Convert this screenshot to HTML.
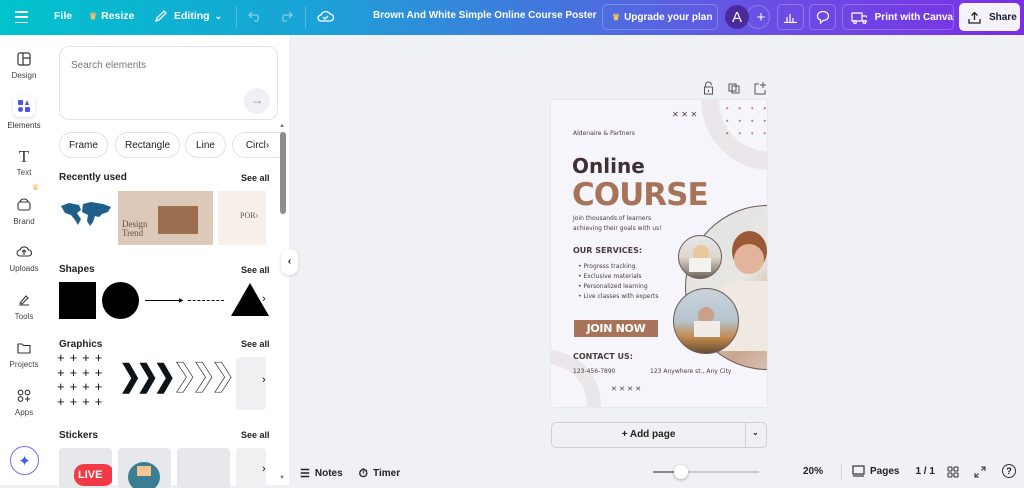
<!DOCTYPE html>
<html><head><meta charset="utf-8"><style>
*{box-sizing:border-box;margin:0;padding:0}
body{width:1024px;height:485px;overflow:hidden;font-family:"Liberation Sans",sans-serif;background:#f0f1f5;position:relative;color:#0d1216}
.a{position:absolute}
.hdr{left:0;top:0;width:1024px;height:35px;background:linear-gradient(90deg,#00c3cc 0%,#1aa3d6 30%,#3d7ddc 50%,#6a4fe4 75%,#7b2ee6 100%);color:#fff;font-size:10.5px;font-weight:bold;white-space:nowrap}
.hdr .a{display:flex;align-items:center}
.hb{border:1px solid rgba(255,255,255,.25);border-radius:5px;height:26px;top:4px}
.rail{left:0;top:35px;width:48px;height:450px;background:#fff}
.ri{width:48px;text-align:center;font-size:8px;color:#444}
.panel{left:48px;top:35px;width:241px;height:450px;background:#fff}
.ttl{font-size:10px;font-weight:bold;color:#222}
.see{font-size:9px;font-weight:bold;color:#222}
.chip{top:132px;height:26px;border:1px solid #e2e0f0;border-radius:13px;font-size:10px;display:flex;align-items:center;justify-content:center;color:#222}
.th{border-radius:4px;background:#e7e8ec}
.poster{left:551px;top:100px;width:216px;height:307px;background:#f6f5fb;overflow:hidden;box-shadow:0 0 2px rgba(0,0,0,.1)}
.pt{font-family:"DejaVu Sans",sans-serif;color:#4a3c3c;white-space:nowrap}
.circ{border-radius:50%;border:1.5px solid #6d5a55;overflow:hidden}
</style></head><body>
<div class="a hdr">
 <div class="a" style="left:14px;top:9px;width:14px;height:16px;flex-direction:column;justify-content:space-between;padding:2px 0"><i style="display:block;width:13px;height:1.5px;background:#fff"></i><i style="display:block;width:13px;height:1.5px;background:#fff"></i><i style="display:block;width:13px;height:1.5px;background:#fff"></i></div>
 <div class="a" style="left:54px;top:10px">File</div>
 <div class="a" style="left:89px;top:10px"><span style="color:#f7c15a;font-size:9px;margin-right:4px">♛</span>Resize</div>
 <div class="a" style="left:154px;top:9px"><svg width="14" height="14" viewBox="0 0 14 14" fill="none" stroke="#fff" stroke-width="1.3"><path d="M2 12l1-3 7-7 2 2-7 7z"/></svg><span style="margin-left:6px">Editing</span><span style="margin-left:5px;font-size:9px">⌄</span></div>
 <div class="a" style="left:236px;top:6px;width:1px;height:22px;background:rgba(255,255,255,.25)"></div>
 <div class="a" style="left:248px;top:10px;opacity:.45"><svg width="14" height="12" fill="none" stroke="#fff" stroke-width="1.3"><path d="M4 2L1 5l3 3M1 5h8a4 4 0 010 6H6"/></svg></div>
 <div class="a" style="left:279px;top:10px;opacity:.45"><svg width="14" height="12" fill="none" stroke="#fff" stroke-width="1.3"><path d="M10 2l3 3-3 3M13 5H5a4 4 0 000 6h3"/></svg></div>
 <div class="a" style="left:305px;top:6px;width:1px;height:22px;background:rgba(255,255,255,.25)"></div>
 <div class="a" style="left:317px;top:9px"><svg width="17" height="14" fill="none" stroke="#fff" stroke-width="1.3"><path d="M4 12a3 3 0 010-6 5 5 0 019-1 3.5 3.5 0 010 7z M6 8l2 2 3-3"/></svg></div>
 <div class="a" style="left:373px;top:10px;font-size:10px">Brown And White Simple Online Course Poster</div>
 <div class="a hb" style="left:602px;width:116px;padding-left:9px;font-size:10px"><span style="color:#f7c15a;font-size:9px;margin-right:4px">♛</span>Upgrade your plan</div>
 <div class="a" style="left:746px;top:5px;width:24px;height:24px;border-radius:50%;border:1px solid rgba(255,255,255,.25);justify-content:center;font-size:15px;font-weight:normal;padding-left:6px">+</div>
 <div class="a" style="left:725px;top:5px;width:24px;height:24px;border-radius:50%;background:#4b2a9e;justify-content:center;font-size:15px;font-weight:normal">A</div>
 <div class="a hb" style="left:777px;width:27px;justify-content:center"><svg width="13" height="11" fill="none" stroke="#fff" stroke-width="1.2"><path d="M0 10.5h13M3 10V5M6 10V2M9 10V6"/></svg></div>
 <div class="a hb" style="left:809px;width:27px;justify-content:center"><svg width="14" height="14" fill="none" stroke="#fff" stroke-width="1.2"><path d="M7 1.5c3.3 0 5.5 2 5.5 4.5S10.3 10.5 7 10.5L4.5 13v-3C2.5 9.3 1.5 7.8 1.5 6 1.5 3.5 3.7 1.5 7 1.5z"/></svg></div>
 <div class="a hb" style="left:842px;width:112px;padding-left:8px;font-size:10px"><svg width="18" height="13" fill="none" stroke="#fff" stroke-width="1.2"><path d="M1 2h10v8H1zM11 5h4l2 2v3h-6"/><circle cx="4" cy="11" r="1.4"/><circle cx="13.5" cy="11" r="1.4"/></svg><span style="margin-left:8px">Print with Canva</span></div>
 <div class="a" style="left:959px;top:3px;width:61px;height:28px;background:#f4f2fa;border-radius:5px;color:#1a1a2a;padding-left:9px;font-size:10px"><svg width="13" height="13" fill="none" stroke="#222" stroke-width="1.3"><path d="M6.5 9V1.5M3.5 4.5l3-3 3 3M1 8v4h11V8"/></svg><span style="margin-left:8px">Share</span></div>
</div>

<div class="a rail">
 <div class="a ri" style="top:17px"><svg width="14" height="14" fill="none" stroke="#333" stroke-width="1.2"><rect x="1" y="1" width="12" height="12" rx="2"/><path d="M6 1v12M6 6h7"/></svg><div style="margin-top:3px">Design</div></div>
 <div class="a" style="left:13px;top:60px;width:22px;height:22px;border-radius:5px;background:#fff;box-shadow:0 1px 3px rgba(0,0,0,.15)"></div>
 <div class="a" style="left:18px;top:65px;width:12px;height:12px"><i class="a" style="left:0;top:0;width:5px;height:5px;background:#4a55e8;border-radius:1px"></i><i class="a" style="left:7px;top:0;width:0;height:0;border-left:2.5px solid transparent;border-right:2.5px solid transparent;border-bottom:5px solid #4a55e8"></i><i class="a" style="left:0;top:7px;width:5px;height:5px;background:#4a55e8;border-radius:50%"></i><i class="a" style="left:7px;top:7px;width:5px;height:5px;background:#4a55e8;border-radius:1px"></i></div>
 <div class="a ri" style="top:86px;color:#333">Elements</div>
 <div class="a ri" style="top:113px"><div style="font-family:'Liberation Serif',serif;font-size:17px;color:#333;line-height:17px">T</div><div style="margin-top:3px">Text</div></div>
 <div class="a" style="left:32px;top:148px;color:#f7b640;font-size:8px">♛</div>
 <div class="a ri" style="top:163px"><svg width="14" height="13" fill="none" stroke="#333" stroke-width="1.1"><rect x="1" y="4" width="12" height="8" rx="2"/><path d="M3 4a4 3 0 018 0"/></svg><div style="margin-top:4px">Brand</div></div>
 <div class="a ri" style="top:210px"><svg width="16" height="13" fill="none" stroke="#333" stroke-width="1.1"><path d="M4 11a3 3 0 010-6 4.5 4.5 0 018.5 0 3 3 0 010 6H4zM8 10V5M6 7l2-2 2 2"/></svg><div style="margin-top:4px">Uploads</div></div>
 <div class="a ri" style="top:258px"><svg width="14" height="13" fill="none" stroke="#333" stroke-width="1.1"><path d="M3 10l6-7 2 2-6 6zM2 12h10"/></svg><div style="margin-top:4px">Tools</div></div>
 <div class="a ri" style="top:306px"><svg width="14" height="13" fill="none" stroke="#333" stroke-width="1.1"><path d="M1 3h4l1.5 1.5H13V12H1z"/></svg><div style="margin-top:4px">Projects</div></div>
 <div class="a ri" style="top:354px"><svg width="14" height="13" fill="none" stroke="#333" stroke-width="1.1"><circle cx="3.5" cy="3.5" r="2.3"/><circle cx="10.5" cy="3.5" r="2.3"/><circle cx="3.5" cy="10" r="2.3"/><path d="M10.5 7.5v5M8 10h5"/></svg><div style="margin-top:4px">Apps</div></div>
 <div class="a" style="left:10px;top:411px;width:29px;height:29px;border-radius:50%;border:1.5px solid #7a6df0;background:#fff;display:flex;align-items:center;justify-content:center;color:#3e5ff0;font-size:15px">✦</div>
</div>

<div class="a panel">
 <div class="a" style="left:11px;top:11px;width:219px;height:74px;border:1px solid #e3e0f5;border-radius:10px"><div class="a" style="left:11px;top:13px;font-size:10px;color:#777">Search elements</div><div class="a" style="left:184px;top:41px;width:26px;height:26px;border-radius:50%;background:#eef0f3;color:#888;text-align:center;line-height:25px;font-size:12px">→</div></div>
 <div class="a chip" style="left:11px;top:97px;width:49px">Frame</div>
 <div class="a chip" style="left:67px;top:97px;width:65px">Rectangle</div>
 <div class="a chip" style="left:137px;top:97px;width:41px">Line</div>
 <div class="a chip" style="left:184px;top:97px;width:50px;border-right:none;border-radius:13px 0 0 13px">Circl›</div>
 <div class="a ttl" style="left:11px;top:137px">Recently used</div><div class="a see" style="left:193px;top:138px">See all</div>
 <svg class="a" style="left:11px;top:165px" width="54" height="30" fill="#1e5f8c"><path d="M2 6l8-3 10 2 2 5-4 3 4 6-3 6-3-5-4-5-6-2zM24 4l8-2 12 2 8 3-3 5-6 2-3 3-4-1-2 6-3 4-3-5 1-6-6-3z"/></svg>
 <div class="a" style="left:70px;top:156px;width:95px;height:54px;background:#dcc9b7"><div class="a" style="left:40px;top:15px;width:40px;height:28px;background:#9a6e4f"></div><div class="a" style="left:4px;top:29px;font-family:'Liberation Serif',serif;font-size:9px;color:#6b5040;line-height:9px">Design<br>Trend</div></div>
 <div class="a" style="left:170px;top:156px;width:48px;height:54px;background:#f7efea"><div class="a" style="left:22px;top:20px;font-family:'Liberation Serif',serif;font-size:8px;color:#555">POR›</div></div>
 <div class="a ttl" style="left:11px;top:229px">Shapes</div><div class="a see" style="left:193px;top:230px">See all</div>
 <div class="a" style="left:11px;top:247px;width:37px;height:37px;background:#000"></div>
 <div class="a" style="left:54px;top:247px;width:37px;height:37px;background:#000;border-radius:50%"></div>
 <div class="a" style="left:97px;top:265px;width:37px;height:1px;background:#000"></div><div class="a" style="left:131px;top:262px;font-size:6px">▶</div>
 <div class="a" style="left:140px;top:265px;width:36px;border-top:1px dashed #000"></div>
 <div class="a" style="left:183px;top:248px;width:0;height:0;border-left:19px solid transparent;border-right:19px solid transparent;border-bottom:33px solid #000"></div>
 <div class="a" style="left:214px;top:258px;font-size:11px">›</div>
 <div class="a ttl" style="left:11px;top:304px">Graphics</div><div class="a see" style="left:193px;top:304px">See all</div>
 <div class="a" style="left:9px;top:316px;font-size:13px;line-height:14.5px;letter-spacing:5px">++++<br>++++<br>++++<br>++++</div>
 <div class="a" style="left:68px;top:327px;font-size:30px;font-weight:bold;letter-spacing:-6px;line-height:30px;transform:scaleX(.9)">❯❯❯</div>
 <div class="a" style="left:124px;top:326px;font-size:30px;line-height:30px;letter-spacing:-6px;color:#fff;-webkit-text-stroke:.7px #333">❯❯❯</div>
 <div class="a th" style="left:188px;top:322px;width:30px;height:53px;background:#f0f0f2"></div><div class="a" style="left:214px;top:339px;font-size:11px">›</div>
 <div class="a ttl" style="left:11px;top:395px">Stickers</div><div class="a see" style="left:193px;top:395px">See all</div>
 <div class="a th" style="left:11px;top:413px;width:53px;height:40px;overflow:hidden"><div class="a" style="left:15px;top:16px;width:40px;height:22px;background:#f23a46;border-radius:10px;color:#fff;font-weight:bold;font-size:11px;line-height:22px;padding-left:4px">LIVE</div></div>
 <div class="a th" style="left:70px;top:413px;width:53px;height:40px;overflow:hidden"><div class="a" style="left:10px;top:14px;width:32px;height:30px;border-radius:50%;background:#3c7d94"></div><div class="a" style="left:19px;top:18px;width:14px;height:10px;background:#f2c592"></div></div>
 <div class="a th" style="left:129px;top:413px;width:53px;height:40px"></div>
 <div class="a th" style="left:188px;top:413px;width:30px;height:40px;background:#f0f0f2"></div><div class="a" style="left:214px;top:428px;font-size:11px">›</div>
 <div class="a" style="left:232px;top:97px;width:6px;height:82px;background:#8d8d8d;border-radius:3px"></div>
 <div class="a" style="left:231px;top:88px;font-size:6px;color:#777">▲</div><div class="a" style="left:231px;top:440px;font-size:6px;color:#777">▼</div>
</div>
<div class="a" style="left:281px;top:249px;width:17px;height:26px;background:#fff;border-radius:8px;box-shadow:0 1px 3px rgba(0,0,0,.15);text-align:center;line-height:26px;font-size:10px;font-weight:bold">‹</div>

<svg class="a" style="left:703px;top:81px" width="66" height="14" fill="none" stroke="#555" stroke-width="1"><path d="M2.5 6V4a3 3 0 016 0M1.5 6h8v7h-8zM5.5 9v2"/><rect x="26" y="3" width="7" height="7"/><rect x="29" y="5" width="7" height="7"/><path d="M56 3H52v10h10V9M60 1v6M57 4h6"/></svg>

<div class="a poster">
 <div class="a" style="left:150px;top:-70px;width:140px;height:140px;border-radius:50%;border:18px solid #ebe6ea"></div>
 <div class="a" style="left:-60px;top:250px;width:110px;height:110px;border-radius:50%;border:14px solid #ebe6ea"></div>
 <div class="a" style="left:170px;top:2px;width:46px;height:40px;background-image:radial-gradient(circle,#c07a58 0.9px,transparent 1.2px);background-size:12.5px 12.5px"></div>
 <div class="a pt" style="left:121px;top:10px;font-size:8px">✕ ✕ ✕</div>
 <div class="a pt" style="left:22px;top:30px;font-size:6px">Aldenaire &amp; Partners</div>
 <div class="a pt" style="left:21px;top:54px;font-size:20px;font-weight:bold;color:#3e3033">Online</div>
 <div class="a pt" style="left:21px;top:77px;font-size:31px;font-weight:bold;color:#a7745a;letter-spacing:-1px;line-height:36px">COURSE</div>
 <div class="a pt" style="left:22px;top:114px;font-size:6px;line-height:9.5px">Join thousands of learners<br>achieving their goals with us!</div>
 <div class="a pt" style="left:22px;top:146px;font-size:8px;font-weight:bold">OUR SERVICES:</div>
 <div class="a pt" style="left:27px;top:162px;font-size:6px;line-height:10px">• Progress tracking<br>• Exclusive materials<br>• Personalized learning<br>• Live classes with experts</div>
 <div class="a" style="left:23px;top:220px;width:84px;height:17px;background:#a7745a;color:#fff;font-family:'DejaVu Sans',sans-serif;font-weight:bold;font-size:11px;text-align:center;line-height:17px;letter-spacing:-.3px">JOIN NOW</div>
 <div class="a pt" style="left:22px;top:252px;font-size:8px;font-weight:bold">CONTACT US:</div>
 <div class="a pt" style="left:22px;top:268px;font-size:6px">123-456-7890</div>
 <div class="a pt" style="left:99px;top:268px;font-size:6px">123 Anywhere st., Any City</div>
 <div class="a pt" style="left:60px;top:285px;font-size:7px">✕ ✕ ✕ ✕</div>
 <div class="a circ" style="left:134px;top:105px;width:165px;height:165px;background:linear-gradient(135deg,#dfe2e4 0%,#e8e6e2 40%,#c8a58e 60%,#f0ece6 100%)"><div class="a" style="left:46px;top:25px;width:35px;height:40px;border-radius:50%;background:#9b5a35"></div><div class="a" style="left:48px;top:38px;width:30px;height:30px;border-radius:50%;background:#e2b49c"></div><div class="a" style="left:30px;top:75px;width:70px;height:70px;background:#efe9e2;border-radius:30% 30% 0 0"></div></div>
 <div class="a circ" style="left:127px;top:135px;width:44px;height:44px;background:linear-gradient(180deg,#e5e7ea 0%,#dfd7cc 50%,#6d665f 100%)"><div class="a" style="left:14px;top:9px;width:16px;height:16px;border-radius:50%;background:#e8c79b"></div><div class="a" style="left:10px;top:22px;width:22px;height:14px;background:#f4f2ef"></div></div>
 <div class="a circ" style="left:122px;top:188px;width:66px;height:66px;background:linear-gradient(180deg,#cad3db 0%,#b6c4ce 50%,#c28a4e 75%,#6a4e34 100%)"><div class="a" style="left:24px;top:18px;width:16px;height:17px;border-radius:50%;background:#caa089"></div><div class="a" style="left:20px;top:32px;width:26px;height:16px;background:#f0ece8"></div></div>
</div>

<div class="a" style="left:551px;top:422px;width:216px;height:26px;border:1px solid #cfcfd6;border-radius:5px;background:#f0f1f5;font-size:10px;font-weight:bold;color:#222"><div class="a" style="left:0;top:0;width:193px;height:24px;text-align:center;line-height:24px">+ Add page</div><div class="a" style="left:193px;top:0;width:1px;height:24px;background:#cfcfd6"></div><div class="a" style="left:200px;top:5px;font-size:8px">⌄</div></div>

<div class="a" style="left:300px;top:466px;font-size:10px;font-weight:bold;color:#222;display:flex;align-items:center"><span style="font-size:11px;margin-right:5px">☰</span>Notes<span style="margin:0 5px 0 16px;font-size:12px">⏱</span>Timer</div>
<div class="a" style="left:653px;top:471px;width:106px;height:2px;background:#c9c9cf"></div><div class="a" style="left:653px;top:471px;width:28px;height:2px;background:#888"></div>
<div class="a" style="left:674px;top:465px;width:14px;height:14px;border-radius:50%;background:#fff;box-shadow:0 1px 3px rgba(0,0,0,.3)"></div>
<div class="a" style="left:803px;top:466px;font-size:10px;font-weight:bold;color:#222">20%</div>
<div class="a" style="left:841px;top:464px;width:1px;height:16px;background:#d6d6dc"></div>
<div class="a" style="left:852px;top:465px;font-size:10px;font-weight:bold;color:#222;display:flex;align-items:center"><svg width="13" height="13" fill="none" stroke="#333" stroke-width="1.2"><rect x="1" y="1" width="11" height="8"/><path d="M1 11h11"/></svg><span style="margin-left:5px">Pages</span><span style="margin-left:16px">1 / 1</span></div>
<svg class="a" style="left:947px;top:466px" width="12" height="12" fill="none" stroke="#333" stroke-width="1.1"><rect x="1" y="1" width="4" height="4" rx="1"/><rect x="7" y="1" width="4" height="4" rx="1"/><rect x="1" y="7" width="4" height="4" rx="1"/><rect x="7" y="7" width="4" height="4" rx="1"/></svg>
<svg class="a" style="left:974px;top:466px" width="12" height="12" fill="none" stroke="#333" stroke-width="1.1"><path d="M7 1h4v4M11 1L7.5 4.5M5 11H1V7M1 11l3.5-3.5"/></svg>
<div class="a" style="left:1002px;top:464px;width:14px;height:14px;border:1.2px solid #333;border-radius:50%;font-size:9px;text-align:center;line-height:12px;font-weight:bold">?</div>
</body></html>
